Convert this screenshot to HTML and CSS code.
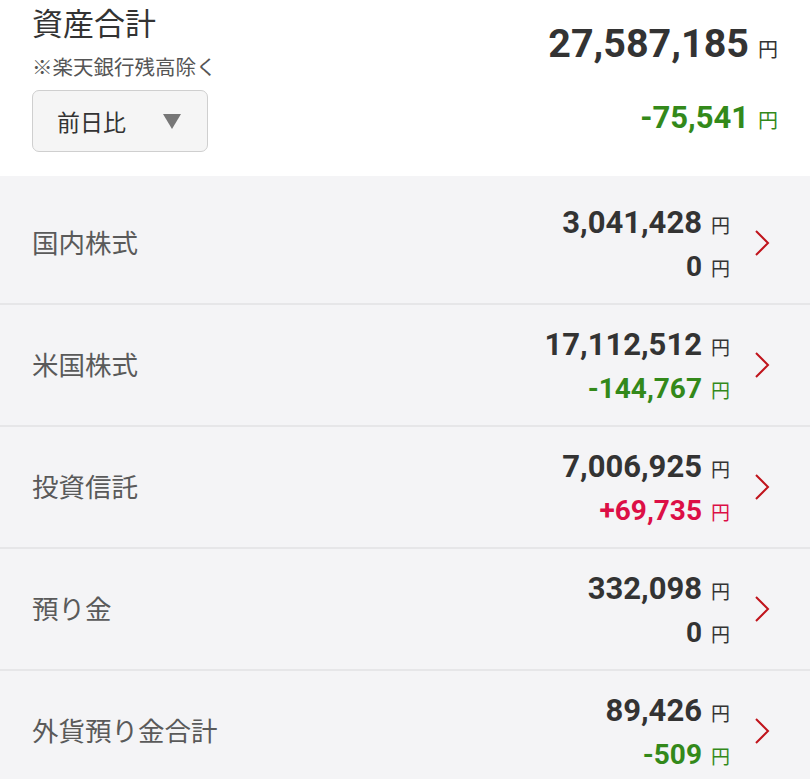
FILE: index.html
```html
<!DOCTYPE html>
<html lang="ja">
<head>
  <meta charset="UTF-8">
  <title>資産合計</title>
  <link rel="stylesheet" href="styles.css">
</head>
<body>
  <div class="summary">
    <div class="summary-left">
      <h1 class="title">資産合計</h1>
      <p class="note">※楽天銀行残高除く</p>
      <button class="period-select">
        <span>前日比</span>
        <span class="caret"></span>
      </button>
    </div>
    <div class="summary-right">
      <div class="total"><span class="num">27,587,185</span><span class="yen">円</span></div>
      <div class="total-diff minus"><span class="num">-75,541</span><span class="yen">円</span></div>
    </div>
  </div>

  <ul class="asset-list">
    <li class="asset-row">
      <span class="asset-name">国内株式</span>
      <div class="asset-values">
        <div class="amount"><span class="num">3,041,428</span><span class="yen">円</span></div>
        <div class="diff"><span class="num">0</span><span class="yen">円</span></div>
      </div>
      <svg class="chevron" width="16" height="28" viewBox="0 0 16 28"><polyline points="2,2 14,14 2,26" /></svg>
    </li>
    <li class="asset-row">
      <span class="asset-name">米国株式</span>
      <div class="asset-values">
        <div class="amount"><span class="num">17,112,512</span><span class="yen">円</span></div>
        <div class="diff minus"><span class="num">-144,767</span><span class="yen">円</span></div>
      </div>
      <svg class="chevron" width="16" height="28" viewBox="0 0 16 28"><polyline points="2,2 14,14 2,26" /></svg>
    </li>
    <li class="asset-row">
      <span class="asset-name">投資信託</span>
      <div class="asset-values">
        <div class="amount"><span class="num">7,006,925</span><span class="yen">円</span></div>
        <div class="diff plus"><span class="num">+69,735</span><span class="yen">円</span></div>
      </div>
      <svg class="chevron" width="16" height="28" viewBox="0 0 16 28"><polyline points="2,2 14,14 2,26" /></svg>
    </li>
    <li class="asset-row">
      <span class="asset-name">預り金</span>
      <div class="asset-values">
        <div class="amount"><span class="num">332,098</span><span class="yen">円</span></div>
        <div class="diff"><span class="num">0</span><span class="yen">円</span></div>
      </div>
      <svg class="chevron" width="16" height="28" viewBox="0 0 16 28"><polyline points="2,2 14,14 2,26" /></svg>
    </li>
    <li class="asset-row">
      <span class="asset-name">外貨預り金合計</span>
      <div class="asset-values">
        <div class="amount"><span class="num">89,426</span><span class="yen">円</span></div>
        <div class="diff minus"><span class="num">-509</span><span class="yen">円</span></div>
      </div>
      <svg class="chevron" width="16" height="28" viewBox="0 0 16 28"><polyline points="2,2 14,14 2,26" /></svg>
    </li>
  </ul>
</body>
</html>
```

FILE: styles.css
```css
body {
  margin: 0;
  font-family: Roboto, "Noto Sans CJK JP", sans-serif;
  color: #333;
  background: #f4f4f6;
}
.summary {
  display: flex;
  justify-content: space-between;
  background: #fff;
  padding: 6px 32px 24px 32px;
}
.summary-left {
  display: flex;
  flex-direction: column;
  align-items: flex-start;
}
.title {
  margin: 0;
  font-size: 31px;
  line-height: 38px;
  font-weight: 400;
  color: #333;
}
.note {
  margin: 10px 0 0;
  font-size: 20.5px;
  line-height: 28px;
  color: #555;
}
.period-select {
  margin-top: 8px;
  width: 176px;
  height: 62px;
  display: flex;
  align-items: center;
  justify-content: space-between;
  padding: 0 26px 0 24px;
  background: #f5f5f5;
  border: 1px solid #cfcfcf;
  border-radius: 7px;
  font-family: inherit;
  font-size: 23px;
  color: #333;
}
.caret {
  width: 0;
  height: 0;
  border-left: 9px solid transparent;
  border-right: 9px solid transparent;
  border-top: 15px solid #777;
}
.summary-right {
  display: flex;
  flex-direction: column;
  align-items: flex-end;
  margin-top: 16px;
}
.total {
  font-size: 39.5px;
  line-height: 44px;
  font-weight: 700;
}
.total-diff {
  margin-top: 32px;
  font-size: 31px;
  line-height: 40px;
  font-weight: 700;
}
.yen {
  font-size: 20px;
  font-weight: 400;
  margin-left: 9px;
  line-height: 1;
}
.minus {
  color: #33891a;
}
.plus {
  color: #dc0f46;
}
.asset-list {
  list-style: none;
  margin: 0;
  padding: 7px 0 0;
}
.asset-row {
  display: flex;
  align-items: center;
  height: 120px;
  padding: 0 40px 0 32px;
  border-bottom: 2px solid #e6e6e8;
}
.asset-name {
  flex: 1;
  font-size: 26.5px;
  color: #5a5a5a;
  margin-top: -3px;
}
.asset-values {
  display: flex;
  flex-direction: column;
  align-items: flex-end;
  margin-top: 4px;
}
.amount {
  font-size: 31px;
  line-height: 36px;
  font-weight: 700;
}
.diff {
  margin-top: 8px;
  font-size: 28px;
  line-height: 36px;
  font-weight: 700;
}
.asset-values .yen {
  font-size: 19px;
}
.chevron {
  margin-left: 24px;
  fill: none;
  stroke: #c0141c;
  stroke-width: 2;
}
```
